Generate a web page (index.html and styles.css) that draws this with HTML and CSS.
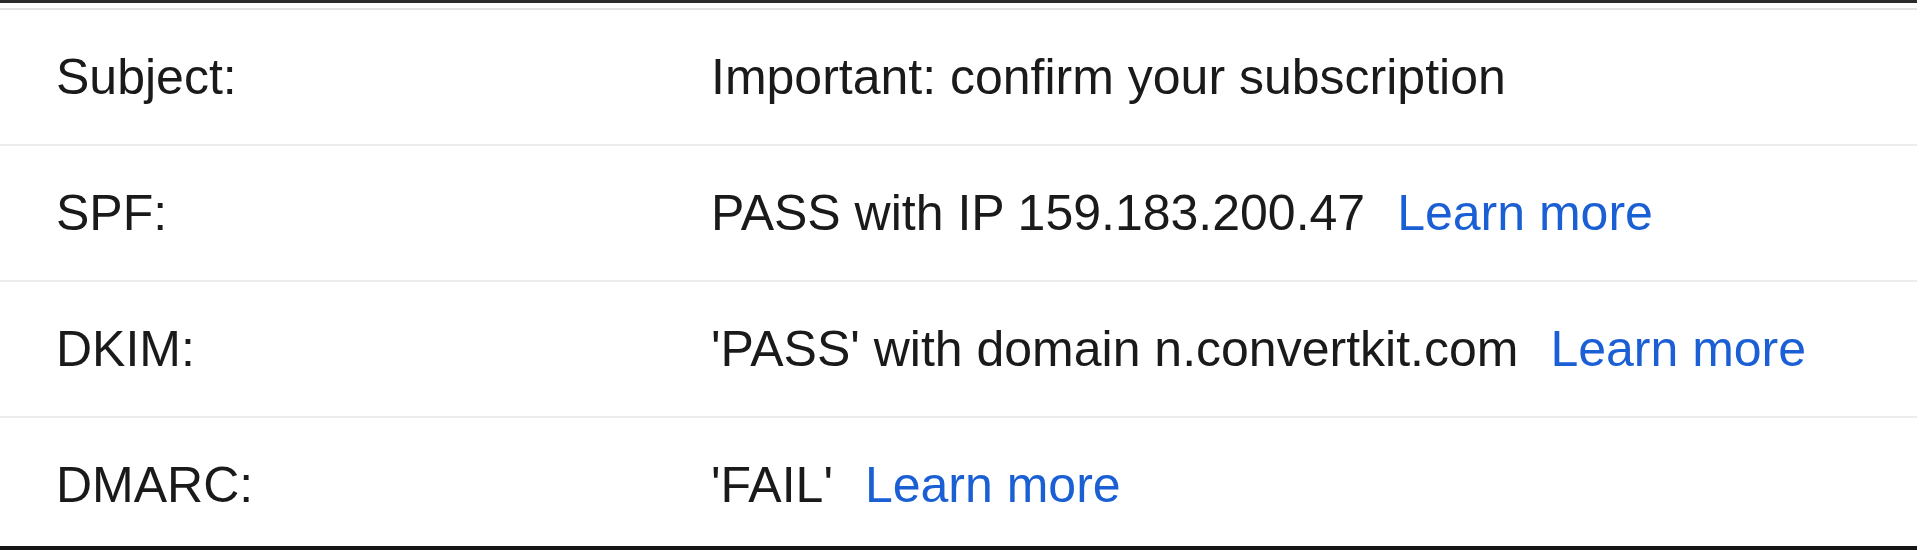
FILE: index.html
```html
<!DOCTYPE html>
<html lang="en">
<head>
<meta charset="utf-8">
<title>Message headers</title>
<link rel="stylesheet" href="styles.css">
</head>
<body>
<div class="frame">
  <div class="table">
    <div class="row">
      <div class="label">Subject:</div>
      <div class="value">Important: confirm your subscription</div>
    </div>
    <div class="row">
      <div class="label">SPF:</div>
      <div class="value">PASS with IP 159.183.200.47<a class="learn" href="#">Learn more</a></div>
    </div>
    <div class="row">
      <div class="label">DKIM:</div>
      <div class="value">'PASS' with domain n.convertkit.com<a class="learn" href="#">Learn more</a></div>
    </div>
    <div class="row last">
      <div class="label">DMARC:</div>
      <div class="value">'FAIL'<a class="learn" href="#">Learn more</a></div>
    </div>
  </div>
</div>
</body>
</html>
```

FILE: styles.css
```css
html, body {
  margin: 0;
  padding: 0;
  background: #ffffff;
}

body {
  width: 1920px;
  height: 550px;
  overflow: hidden;
  font-family: "Liberation Sans", Arial, sans-serif;
  color: #1a1a1a;
}

.frame {
  width: 1917px;
  height: 550px;
  box-sizing: border-box;
  border-top: 3px solid #2b2b2b;
  border-bottom: 4px solid #151515;
  padding-top: 5px;
  display: flex;
  flex-direction: column;
}

.table {
  border-top: 2px solid #e3e3e3;
  display: flex;
  flex-direction: column;
}

.row {
  display: grid;
  grid-template-columns: 655px 1fr;
  align-items: center;
  height: 134px;
  padding-left: 56px;
  border-bottom: 2px solid #ececec;
  font-size: 50px;
  line-height: 1;
}

.row.last {
  height: 128px;
  border-bottom: none;
  padding-top: 6px;
  box-sizing: border-box;
}

.label, .value {
  white-space: nowrap;
}

.learn {
  margin-left: 32px;
  color: #1b5fd4;
  text-decoration: none;
}
```
